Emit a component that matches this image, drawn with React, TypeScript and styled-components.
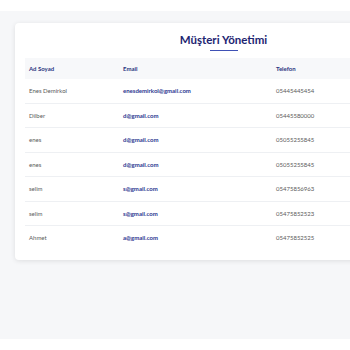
import React from "react"
import styled, { createGlobalStyle } from "styled-components"

const GlobalStyle = createGlobalStyle`
  html, body {
    margin: 0;
    padding: 0;
    background: #ffffff;
    font-family: Lato, "Open Sans", sans-serif;
    overflow: hidden;
  }
`

interface Customer {
  name: string
  email: string
  phone: string
}

const customers: Customer[] = [
  { name: "Enes Demirkol", email: "enesdemirkol@gmail.com", phone: "05445445454" },
  { name: "Dilber", email: "d@gmail.com", phone: "05445580000" },
  { name: "enes", email: "d@gmail.com", phone: "05055255845" },
  { name: "enes", email: "d@gmail.com", phone: "05055255845" },
  { name: "selim", email: "s@gmail.com", phone: "05475856963" },
  { name: "selim", email: "s@gmail.com", phone: "05475852523" },
  { name: "Ahmet", email: "a@gmail.com", phone: "05475852525" },
]

const Page = styled.div`
  width: 350px;
  height: 350px;
  display: flex;
  flex-direction: column;
  overflow: hidden;
`

const TopBar = styled.header`
  height: 11px;
  flex: none;
  background: #ffffff;
`

const Main = styled.main`
  flex: 1;
  background: #f6f7f9;
  padding: 12px 0 0 15px;
  overflow: hidden;
`

const Footer = styled.footer`
  height: 11px;
  flex: none;
  background: #ffffff;
`

const Card = styled.section`
  width: 417px;
  box-sizing: border-box;
  background: #ffffff;
  border-radius: 4px;
  box-shadow: 0 1px 5px rgba(0, 0, 0, 0.1);
  padding: 10px 10px 10px;
`

const Title = styled.h2`
  margin: 0;
  text-align: center;
  font-size: 11.5px;
  line-height: 14px;
  font-weight: 700;
  color: #1d2571;
`

const Underline = styled.div`
  width: 28px;
  height: 1px;
  margin: 3px auto 7px;
  background: #3f51b5;
`

const Table = styled.table`
  width: 100%;
  border-collapse: collapse;
  table-layout: fixed;
  font-size: 6px;
`

const HeadCell = styled.th<{ $width?: number }>`
  width: ${(p) => (p.$width ? `${p.$width}px` : "auto")};
  height: 21px;
  padding: 0 0 0 4px;
  background: #f7f8fa;
  text-align: left;
  font-weight: 700;
  color: #2a3580;
`

const Row = styled.tr`
  border-bottom: 1px solid #eef0f3;

  &:last-child {
    border-bottom: none;
  }
`

const Cell = styled.td<{ $link?: boolean }>`
  height: 23.5px;
  padding: 0 0 0 4px;
  color: ${(p) => (p.$link ? "#2b3590" : "#5a5a5a")};
  font-weight: ${(p) => (p.$link ? 700 : 400)};
`

export default function App() {
  return (
    <>
      <GlobalStyle />
      <Page>
        <TopBar />
        <Main>
          <Card>
            <Title>Müşteri Yönetimi</Title>
            <Underline />
            <Table>
              <thead>
                <tr>
                  <HeadCell $width={90}>Ad Soyad</HeadCell>
                  <HeadCell $width={149}>Email</HeadCell>
                  <HeadCell>Telefon</HeadCell>
                </tr>
              </thead>
              <tbody>
                {customers.map((c, i) => (
                  <Row key={i}>
                    <Cell>{c.name}</Cell>
                    <Cell $link>{c.email}</Cell>
                    <Cell>{c.phone}</Cell>
                  </Row>
                ))}
              </tbody>
            </Table>
          </Card>
        </Main>
        <Footer />
      </Page>
    </>
  )
}
